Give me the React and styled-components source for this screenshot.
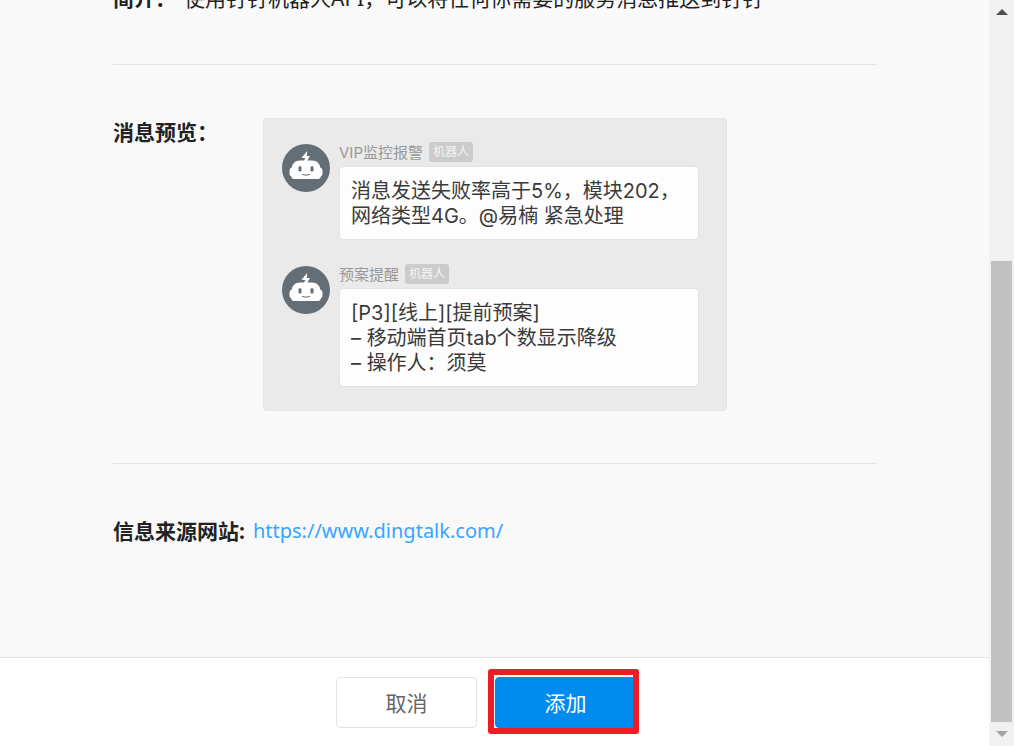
import React from 'react';
import styled, { createGlobalStyle } from 'styled-components';

const COLORS = {
  page: '#f9f9f9',
  line: '#e3e3e3',
  text: '#222',
  link: '#38a5ff',
  primary: '#008cee',
  mark: '#ee1c25',
};

const MESSAGES = [
  {
    sender: 'VIP监控报警',
    lines: ['消息发送失败率高于5%，模块202，', '网络类型4G。@易楠 紧急处理'],
  },
  {
    sender: '预案提醒',
    lines: ['[P3][线上][提前预案]', '– 移动端首页tab个数显示降级', '– 操作人：须莫'],
  },
];

const RobotIcon = () => (
  <Avatar viewBox="0 0 48 48" aria-hidden="true">
    <circle cx="24" cy="24" r="24" fill="#636e77" />
    <path
      fill="#fff"
      d="M25.2 7 L19.4 14 H23.2 L22.2 16.6 H18 C13.4 16.6 10.4 19.4 9.8 23.4 C8.2 23.8 7.5 25.2 7.5 27.5 V29.5 C7.5 31 8.2 32 9.2 32.3 C9.4 34.2 10.2 35 12 35 H36 C37.8 35 38.6 34.2 38.8 32.3 C39.8 32 40.5 31 40.5 29.5 V27.5 C40.5 25.2 39.8 23.8 38.2 23.4 C37.6 19.4 34.6 16.6 30 16.6 H25.4 L28 12 H24.8 Z"
    />
    <rect x="16.5" y="22.2" width="3" height="5.4" rx="1.4" fill="#636e77" />
    <rect x="28.5" y="22.2" width="3" height="5.4" rx="1.4" fill="#636e77" />
    <path
      d="M20.5 30.6 Q24 31.9 27.5 30.6"
      fill="none"
      stroke="#636e77"
      strokeWidth="1"
      strokeLinecap="round"
    />
  </Avatar>
);

const Message = ({ sender, lines }) => (
  <MessageRow>
    <RobotIcon />
    <MessageBody>
      <MessageHeader>
        <Sender>{sender}</Sender>
        <Tag>机器人</Tag>
      </MessageHeader>
      <Bubble>
        {lines.map((line) => (
          <Line key={line}>{line}</Line>
        ))}
      </Bubble>
    </MessageBody>
  </MessageRow>
);

const App = () => {
  return (
    <>
      <GlobalStyle />
      <Window>
        <Dialog>
          <Content>
            <Section>
              <Label>简介：</Label>
              <Intro>
                使用钉钉机器人API，可以将任何你需要的服务消息推送到钉钉
              </Intro>
            </Section>
            <Section>
              <PreviewLabel>消息预览：</PreviewLabel>
              <Preview>
                {MESSAGES.map((message) => (
                  <Message key={message.sender} {...message} />
                ))}
              </Preview>
            </Section>
            <LastSection>
              <Label>信息来源网站:</Label>
              <SiteLink href="https://www.dingtalk.com/">
                https://www.dingtalk.com/
              </SiteLink>
            </LastSection>
          </Content>
          <Footer>
            <Button type="button">取消</Button>
            <Marked>
              <PrimaryButton type="button">添加</PrimaryButton>
            </Marked>
          </Footer>
        </Dialog>
        <Scrollbar>
          <Arrow type="button" aria-label="Scroll up" $color="#505050">
            <svg width="12" height="6" viewBox="0 0 12 6">
              <path d="M0 6 L6 0 L12 6 Z" fill="currentColor" />
            </svg>
          </Arrow>
          <Track>
            <Thumb />
          </Track>
          <Arrow type="button" aria-label="Scroll down" $color="#a3a3a3">
            <svg width="12" height="6" viewBox="0 0 12 6">
              <path d="M0 0 L6 6 L12 0 Z" fill="currentColor" />
            </svg>
          </Arrow>
        </Scrollbar>
      </Window>
    </>
  );
};

const GlobalStyle = createGlobalStyle`
  *, *::before, *::after {
    box-sizing: border-box;
  }

  body {
    margin: 0;
    color: ${COLORS.text};
    background: ${COLORS.page};
    font-family: 'Noto Sans', 'Noto Sans CJK SC', sans-serif;
    font-size: 21px;
    line-height: 28px;
  }

  p, h2 {
    margin: 0;
  }
`;

const Window = styled.div`
  display: flex;
  height: 100vh;
  overflow: hidden;
`;

const Dialog = styled.main`
  flex: 1;
  min-width: 0;
  display: flex;
  flex-direction: column;
`;

// Scrolled to the end, so the sections are stacked from the bottom up.
const Content = styled.div`
  flex: 1;
  min-height: 0;
  display: flex;
  flex-direction: column;
  justify-content: flex-end;
  padding: 0 112px 0 113px;
  overflow: hidden;
`;

const Section = styled.section`
  display: flex;
  flex-shrink: 0;
  align-items: flex-start;
  gap: 8px;
  padding: 53px 0 52px;
  border-bottom: 1px solid ${COLORS.line};
`;

const LastSection = styled(Section)`
  padding-bottom: 112px;
  border-bottom: none;
`;

const Label = styled.h2`
  flex-shrink: 0;
  font-size: 21px;
  font-weight: 700;
`;

const PreviewLabel = styled(Label)`
  width: 142px;
`;

const Intro = styled.p`
  white-space: nowrap;
`;

const Preview = styled.div`
  flex: 0 1 464px;
  display: flex;
  flex-direction: column;
  gap: 24px;
  padding: 23px 27px 23px 18px;
  border: 1px solid #e4e4e4;
  border-radius: 4px;
  background: #eaeaea;
`;

const MessageRow = styled.article`
  display: flex;
  align-items: flex-start;
  gap: 9px;
`;

const Avatar = styled.svg`
  flex-shrink: 0;
  width: 48px;
  height: 48px;
  margin-top: 2px;
`;

const MessageBody = styled.div`
  flex: 1;
  min-width: 0;
`;

const MessageHeader = styled.header`
  display: flex;
  align-items: center;
  gap: 6px;
  height: 20px;
  margin-bottom: 4px;
`;

const Sender = styled.span`
  padding-top: 2px;
  color: #999;
  font-family: Inter, 'Noto Sans CJK SC', sans-serif;
  font-size: 15px;
`;

const Tag = styled.span`
  padding: 0 4px;
  border-radius: 3px;
  color: #f4f4f4;
  background: #cbcbcb;
  font-size: 12px;
  line-height: 20px;
`;

const Bubble = styled.div`
  padding: 12px 11px 10px;
  border: 1px solid #e2e2e2;
  border-radius: 4px;
  background: #fdfdfd;
`;

const Line = styled.p`
  color: #3a3a3a;
  font-family: Inter, 'Noto Sans CJK SC', sans-serif;
  font-size: 20px;
  line-height: 25px;
  white-space: nowrap;
`;

const SiteLink = styled.a`
  color: ${COLORS.link};
  font-size: 20px;
  text-decoration: none;
`;

const Footer = styled.footer`
  display: flex;
  flex-shrink: 0;
  justify-content: center;
  gap: 18px;
  padding: 19px 17px 18px 0;
  border-top: 1px solid ${COLORS.line};
  background: #fff;
`;

const Button = styled.button`
  width: 141px;
  height: 51px;
  padding: 0;
  border: 1px solid #e3e3e3;
  border-radius: 4px;
  color: #666;
  background: #fff;
  font: inherit;
  cursor: pointer;
`;

const PrimaryButton = styled(Button)`
  border-color: ${COLORS.primary};
  color: #fff;
  background: ${COLORS.primary};
`;

const Marked = styled.div`
  position: relative;

  &::after {
    content: '';
    position: absolute;
    inset: -8px -3px -6px -7px;
    border: 6px solid ${COLORS.mark};
    border-radius: 3px;
    pointer-events: none;
  }
`;

const Scrollbar = styled.div`
  display: flex;
  flex-direction: column;
  flex-shrink: 0;
  width: 25px;
  padding: 0 2px;
  background: #f1f1f1;
`;

const Arrow = styled.button`
  display: grid;
  place-items: center;
  height: 24px;
  padding: 0;
  border: none;
  color: ${(p) => p.$color};
  background: none;
`;

const Track = styled.div`
  flex: 1;
  display: flex;
  flex-direction: column;
  justify-content: flex-end;
`;

const Thumb = styled.div`
  height: 66%;
  background: #c1c1c1;
`;

export default App;
